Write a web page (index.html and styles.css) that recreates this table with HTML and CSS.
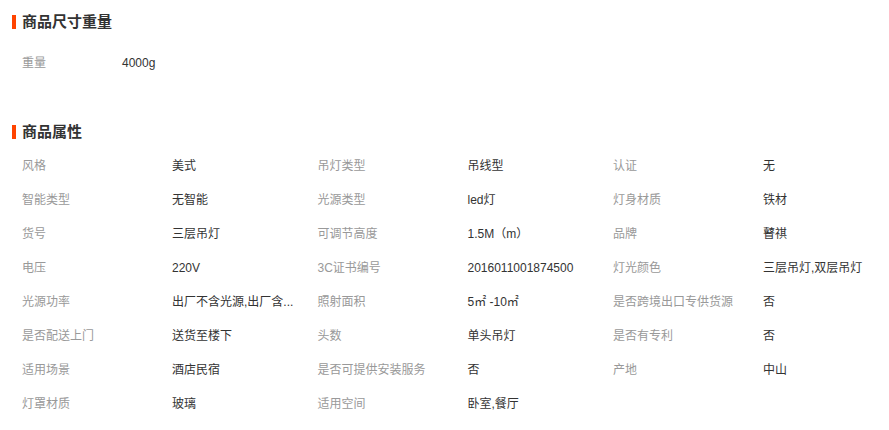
FILE: index.html
```html
<!DOCTYPE html>
<html lang="zh-CN">
<head>
    <meta charset="UTF-8">
    <title>商品参数</title>
    <link rel="stylesheet" href="styles.css">
</head>
<body>

    <div class="bloque bloque-peso">
        <h3 class="titulo">商品尺寸重量</h3>
        <ul class="lista lista-peso">
            <li><span class="nombre">重量</span><span class="valor">4000g</span></li>
        </ul>
    </div>

    <div class="bloque bloque-atributos">
        <h3 class="titulo">商品属性</h3>
        <ul class="lista lista-atributos">
            <li><span class="nombre">风格</span><span class="valor">美式</span></li>
            <li><span class="nombre">吊灯类型</span><span class="valor">吊线型</span></li>
            <li><span class="nombre">认证</span><span class="valor">无</span></li>

            <li><span class="nombre">智能类型</span><span class="valor">无智能</span></li>
            <li><span class="nombre">光源类型</span><span class="valor">led灯</span></li>
            <li><span class="nombre">灯身材质</span><span class="valor">铁材</span></li>

            <li><span class="nombre">货号</span><span class="valor">三层吊灯</span></li>
            <li><span class="nombre">可调节高度</span><span class="valor">1.5M（m）</span></li>
            <li><span class="nombre">品牌</span><span class="valor">瞽祺</span></li>

            <li><span class="nombre">电压</span><span class="valor">220V</span></li>
            <li><span class="nombre">3C证书编号</span><span class="valor">2016011001874500</span></li>
            <li><span class="nombre">灯光颜色</span><span class="valor">三层吊灯,双层吊灯</span></li>

            <li><span class="nombre">光源功率</span><span class="valor" title="出厂不含光源,出厂含光源">出厂不含光源,出厂含...</span></li>
            <li><span class="nombre">照射面积</span><span class="valor">5㎡ -10㎡</span></li>
            <li><span class="nombre">是否跨境出口专供货源</span><span class="valor">否</span></li>

            <li><span class="nombre">是否配送上门</span><span class="valor">送货至楼下</span></li>
            <li><span class="nombre">头数</span><span class="valor">单头吊灯</span></li>
            <li><span class="nombre">是否有专利</span><span class="valor">否</span></li>

            <li><span class="nombre">适用场景</span><span class="valor">酒店民宿</span></li>
            <li><span class="nombre">是否可提供安装服务</span><span class="valor">否</span></li>
            <li><span class="nombre">产地</span><span class="valor">中山</span></li>

            <li><span class="nombre">灯罩材质</span><span class="valor">玻璃</span></li>
            <li><span class="nombre">适用空间</span><span class="valor">卧室,餐厅</span></li>
        </ul>
    </div>

</body>
</html>
```

FILE: styles.css
```css
body {
    font-family: "Liberation Sans", "Noto Sans CJK SC", sans-serif;
    font-size: 12px;
    color: #333;
    background-color: #fff;
    margin: 0;
}

.bloque {
    padding-left: 12px;
}

.titulo {
    margin: 0;
    border-left: 4px solid #ff4400;
    padding-left: 6px;
    font-size: 15px;
    font-weight: bold;
    line-height: 14px;
    color: #333;
}

.bloque-peso {
    padding-top: 15px;
}

.bloque-atributos {
    padding-top: 45px;
}

.lista {
    list-style: none;
    margin: 0;
    padding: 0 0 0 10px;
}

.lista li {
    display: flex;
    height: 34px;
    line-height: 34px;
}

.lista-peso {
    margin-top: 17px;
}

.lista-peso .nombre {
    width: 100px;
}

.lista-atributos {
    display: grid;
    grid-template-columns: repeat(3, 295.5px);
    margin-top: 10px;
}

.lista-atributos .nombre {
    width: 150px;
}

.nombre {
    color: #999;
    white-space: nowrap;
}

.valor {
    color: #333;
    white-space: nowrap;
}
```
